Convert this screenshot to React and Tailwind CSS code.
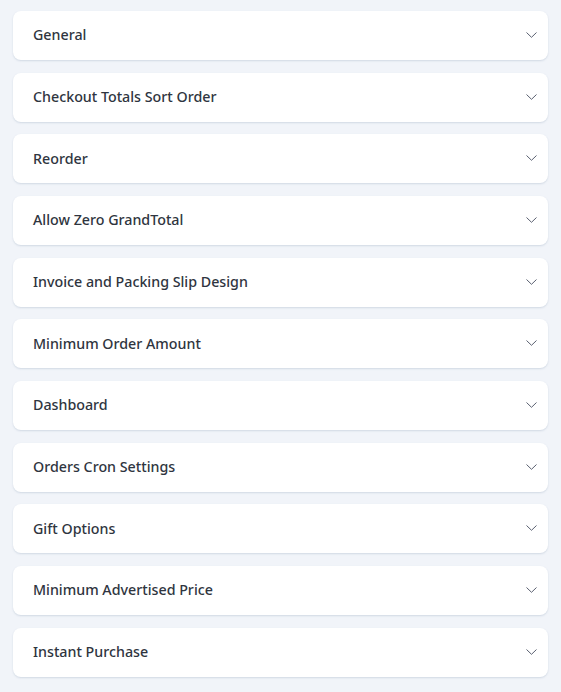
import React from "react";

const items = [
  "General",
  "Checkout Totals Sort Order",
  "Reorder",
  "Allow Zero GrandTotal",
  "Invoice and Packing Slip Design",
  "Minimum Order Amount",
  "Dashboard",
  "Orders Cron Settings",
  "Gift Options",
  "Minimum Advertised Price",
  "Instant Purchase",
];

function Chevron() {
  return (
    <svg width="11" height="6" viewBox="0 0 11 6" fill="none" className="shrink-0">
      <path d="M0.5 0.5L5.5 5.3L10.5 0.5" stroke="#5a6070" strokeWidth="1" />
    </svg>
  );
}

export default function App() {
  return (
    <div
      className="min-h-[692px] w-full bg-[#f1f4f9] pt-[11px] px-[13px] pb-[15px]"
      style={{ fontFamily: '"Noto Sans", "Open Sans", sans-serif' }}
    >
      <div className="flex flex-col gap-[12.67px]">
        {items.map((t) => (
          <div
            key={t}
            className="flex h-[49px] items-center justify-between rounded-lg bg-white pb-[1px] pl-5 pr-[11px] shadow-[0_1px_2px_rgba(150,165,190,0.35)]"
          >
            <span className="text-[14.25px] font-medium text-[#2f3540]">{t}</span>
            <Chevron />
          </div>
        ))}
      </div>
    </div>
  );
}
